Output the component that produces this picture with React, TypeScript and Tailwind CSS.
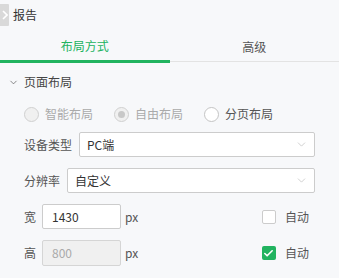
import { ChevronDown, Check } from "lucide-react";

function Radio({ label, checked, disabled }: { label: string; checked?: boolean; disabled?: boolean }) {
  return (
    <div className="flex w-[90px] items-center gap-[6px]">
      <span
        className={
          "flex h-[15px] w-[15px] items-center justify-center rounded-full border " +
          (disabled ? "border-[#d0d0d0] bg-[#f0f0f0]" : "border-[#c4c4c4] bg-white")
        }
      >
        {checked && <span className="h-[7px] w-[7px] rounded-full bg-[#c8c8c8]" />}
      </span>
      <span className={disabled ? "text-[#aaaaaa]" : "text-[#555555]"}>{label}</span>
    </div>
  );
}

function Select({ value }: { value: string }) {
  return (
    <div className="flex h-[25px] flex-1 items-center justify-between rounded-[2px] border border-[#cccccc] bg-white pl-[7px] pr-[6px] text-[#333333]">
      <span>{value}</span>
      <ChevronDown size={13} strokeWidth={1.2} className="text-[#b8b8b8]" />
    </div>
  );
}

function Checkbox({ checked }: { checked?: boolean }) {
  return (
    <div className="ml-auto mr-[6px] flex items-center gap-[9px]">
      {checked ? (
        <span className="flex h-[14px] w-[14px] items-center justify-center rounded-[2px] bg-[#21b35f]">
          <Check size={11} strokeWidth={3.5} className="text-white" />
        </span>
      ) : (
        <span className="h-[14px] w-[14px] rounded-[2px] border border-[#cccccc] bg-white" />
      )}
      <span className="text-[#555555]">自动</span>
    </div>
  );
}

export default function App() {
  return (
    <div
      className="h-[278px] w-[339px] overflow-hidden bg-[#f7f8fa] text-[12px] leading-none"
      style={{ fontFamily: '"Noto Sans CJK SC", "Noto Sans", sans-serif' }}
    >
      {/* header */}
      <div className="flex h-[30px] items-center gap-[4px]">
        <div className="flex h-[22px] w-[9px] items-center justify-center rounded-r-[1px] bg-[#d9d9d9]">
          <svg width="6" height="10" viewBox="0 0 6 10">
            <polyline points="1,1 5,5 1,9" fill="none" stroke="#ffffff" strokeWidth="1.6" />
          </svg>
        </div>
        <span className="text-[#333333]">报告</span>
      </div>

      {/* tabs */}
      <div className="flex h-[33px]">
        <div className="flex flex-1 items-center justify-center border-b-[3px] border-[#21b35f] pt-[2px] text-[#21b35f]">
          布局方式
        </div>
        <div className="flex flex-1 flex-col">
          <div className="flex flex-1 items-center justify-center pt-[3px] text-[#555555]">高级</div>
          <div className="mb-[1px] h-px bg-[#e3e3e3]" />
        </div>
      </div>

      {/* section */}
      <div className="mt-[9px] flex h-[20px] items-center gap-[5px] pl-[8px] text-[#444444]">
        <ChevronDown size={11} strokeWidth={1.5} className="text-[#555555]" />
        <span>页面布局</span>
      </div>

      <div className="mt-[12px] flex h-[20px] items-center pl-[24px]">
        <Radio label="智能布局" disabled />
        <Radio label="自由布局" checked disabled />
        <Radio label="分页布局" />
      </div>

      <div className="px-[24px]">
        <div className="mt-[8px] flex items-center gap-[7px]">
          <span className="text-[#555555]">设备类型</span>
          <Select value="PC端" />
        </div>
        <div className="mt-[11px] flex items-center gap-[7px]">
          <span className="text-[#555555]">分辨率</span>
          <Select value="自定义" />
        </div>

        <div className="mt-[11px] flex items-center">
          <span className="w-[18px] text-[#555555]">宽</span>
          <div className="flex h-[25px] w-[79px] items-center rounded-[2px] border border-[#cccccc] bg-white pl-[9px] text-[#333333]">
            1430
          </div>
          <span className="ml-[4px] text-[#555555]">px</span>
          <Checkbox />
        </div>
        <div className="mt-[11px] flex items-center">
          <span className="w-[18px] text-[#555555]">高</span>
          <div className="flex h-[26px] w-[79px] items-center rounded-[2px] border border-[#d5d5d5] bg-[#f0f0f0] pl-[9px] text-[#aaaaaa]">
            800
          </div>
          <span className="ml-[4px] text-[#555555]">px</span>
          <Checkbox checked />
        </div>
      </div>
    </div>
  );
}
